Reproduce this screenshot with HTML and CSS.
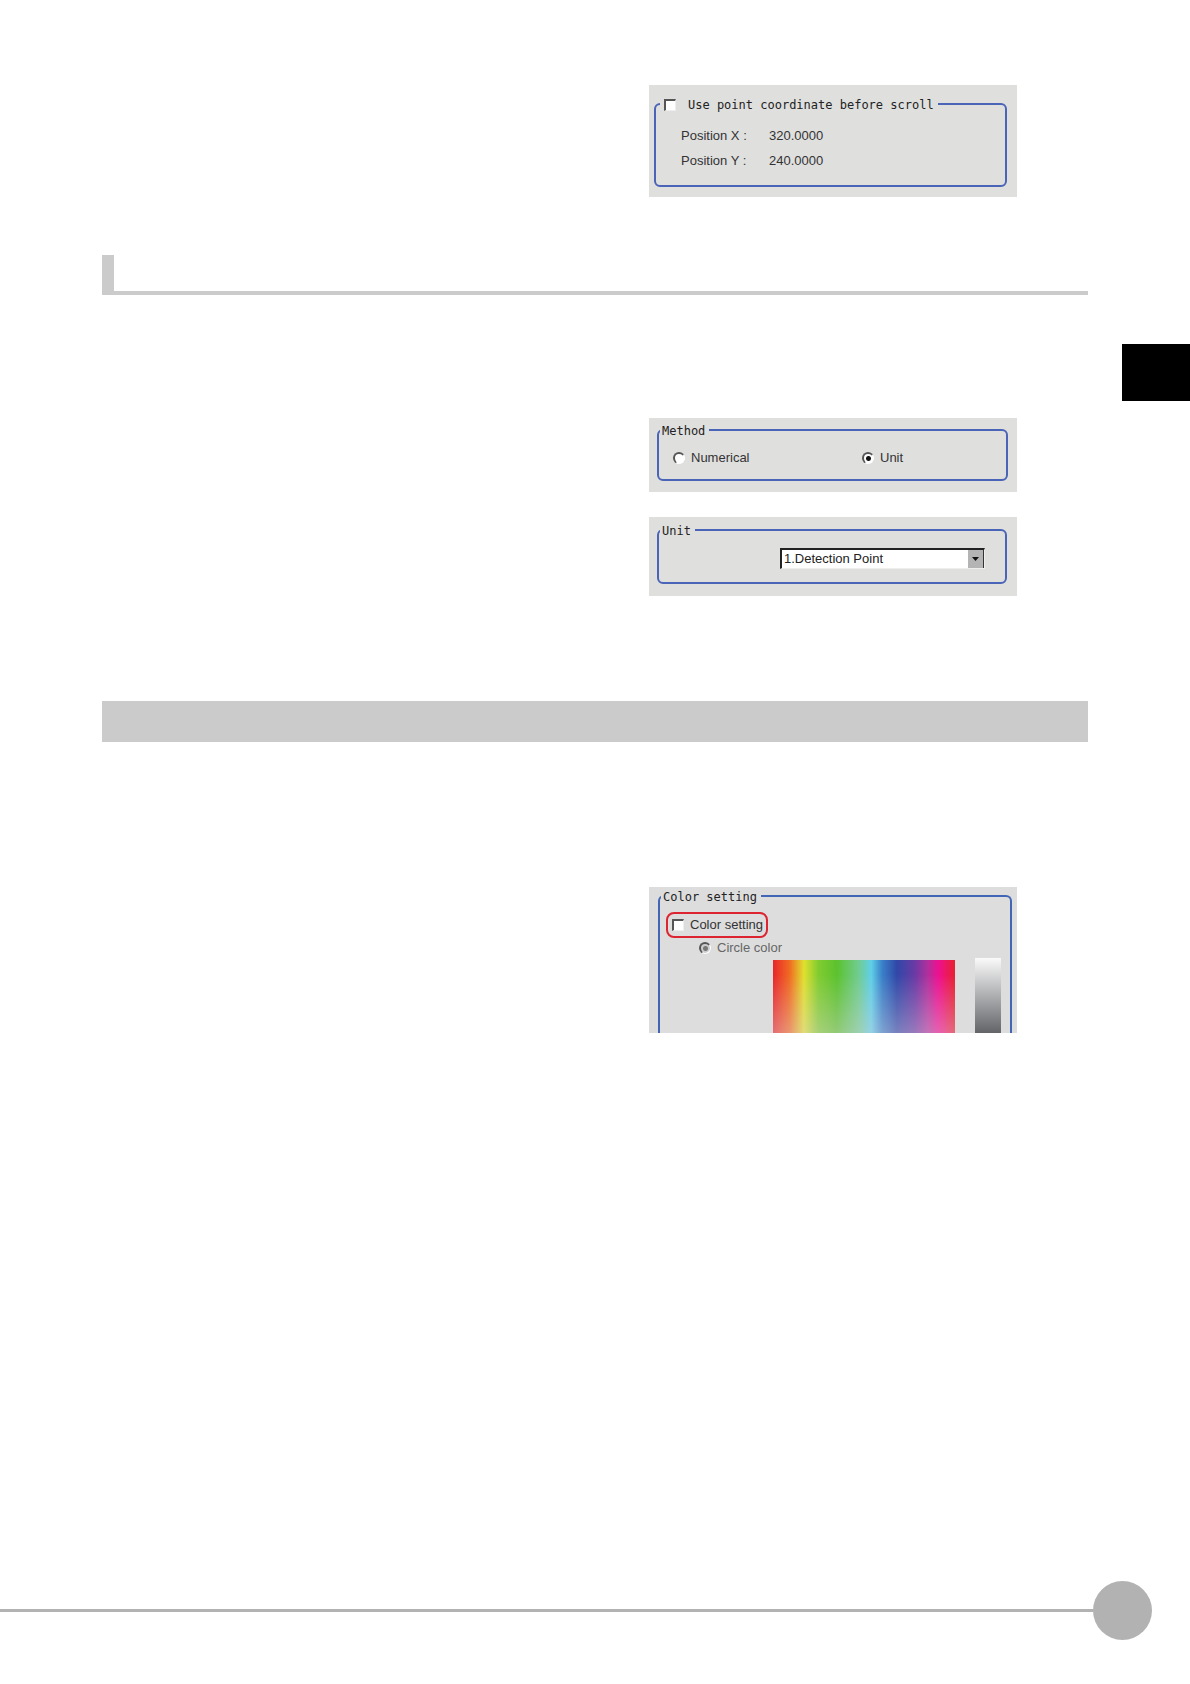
FILE: index.html
```
<!DOCTYPE html>
<html lang="en">

<head>
    <meta charset="utf-8">
    <meta name="viewport" content="width=device-width, initial-scale=1.0">
    <title>Settings</title>
    <link rel="stylesheet" href="styles.css">
</head>

<body>
    <div class="page">
        <main>
            <section class="panel panel-point">
                <fieldset>
                    <legend>
                        <input type="checkbox" id="scroll">
                        <label for="scroll">Use point coordinate before scroll</label>
                    </legend>
                    <dl>
                        <dt>Position X :</dt>
                        <dd>320.0000</dd>
                        <dt>Position Y :</dt>
                        <dd>240.0000</dd>
                    </dl>
                </fieldset>
            </section>

            <div class="heading-line"></div>

            <section class="panel panel-method">
                <fieldset>
                    <legend>Method</legend>
                    <div class="choices">
                        <div class="choice">
                            <input type="radio" name="method" id="numerical">
                            <label for="numerical">Numerical</label>
                        </div>
                        <div class="choice">
                            <input type="radio" name="method" id="unit" checked>
                            <label for="unit">Unit</label>
                        </div>
                    </div>
                </fieldset>
            </section>

            <section class="panel panel-unit">
                <fieldset>
                    <legend>Unit</legend>
                    <div class="dropdown">
                        <select aria-label="Unit">
                            <option>1.Detection Point</option>
                        </select>
                        <span class="arrow">
                            <svg width="7" height="4" viewBox="0 0 7 4"><path d="M0 0h7L3.5 4z" fill="#111"/></svg>
                        </span>
                    </div>
                </fieldset>
            </section>

            <div class="heading-band"></div>

            <section class="panel panel-color">
                <fieldset>
                    <legend>Color setting</legend>
                    <div class="choice marked">
                        <input type="checkbox" id="color">
                        <label for="color">Color setting</label>
                    </div>
                    <div class="choice circle">
                        <input type="radio" name="target" id="circle" checked disabled>
                        <label for="circle">Circle color</label>
                    </div>
                    <div class="picker">
                        <div class="spectrum"></div>
                        <div class="brightness"></div>
                    </div>
                </fieldset>
            </section>
        </main>
        <aside>
            <div class="tab"></div>
        </aside>
    </div>
    <footer>
        <div class="rule"></div>
        <div class="page-number"></div>
    </footer>
</body>

</html>
```

FILE: styles.css
```
* {
    box-sizing: border-box;
}

body {
    margin: 0;
    min-height: 100vh;
    display: flex;
    flex-direction: column;
    background-color: white;
    color: #333;
    font-family: "Liberation Sans", Arial, sans-serif;
    font-size: 13px;
    line-height: 16px;
}

.page {
    display: grid;
    grid-template-columns: minmax(0, 1fr) 102px;
    padding-left: 102px;
}

main {
    padding-top: 85px;
}

/**************** Headings **************/

.heading-line {
    height: 40px;
    margin: 58px 0 123px;
    border-left: 12px solid #cbcbcb;
    border-bottom: 4px solid #cbcbcb;
}

.heading-band {
    height: 41px;
    margin: 105px 0 145px;
    background-color: #cbcbcb;
}

.tab {
    width: 68px;
    height: 57px;
    margin: 344px 0 0 auto;
    background-color: black;
}

/**************** Panels **************/

.panel {
    width: 368px;
    margin-left: auto;
    margin-right: 71px;
    background-color: #dfdfde;
}

.panel-point {
    padding: 11px 10px 10px 5px;
}

.panel-method {
    padding: 4px 9px 11px 8px;
    margin-bottom: 25px;
}

.panel-unit {
    padding: 5px 10px 12px 8px;
}

.panel-color {
    padding: 1px 5px 0 9px;
    background-color: #dddddd;
}

fieldset {
    margin: 0;
    padding: 0;
    min-width: 0;
    border: 2px solid #4a64b8;
    border-radius: 6px;
}

legend {
    padding: 2px 4px 0 2px;
    margin-left: 1px;
    font-family: "DejaVu Sans Mono", monospace;
    font-size: 12px;
    line-height: 14px;
    color: #222;
}

.panel-point legend {
    display: flex;
    align-items: center;
    gap: 12px;
    margin-left: 4px;
    padding: 2px 4px 0;
}

dl {
    display: grid;
    grid-template-columns: 88px 1fr;
    margin: 0;
    padding: 11px 0 12px 25px;
    line-height: 25px;
}

dd {
    margin: 0;
}

/**************** Controls **************/

input {
    appearance: none;
    flex: none;
    width: 12px;
    height: 12px;
    margin: 0;
    background-color: white;
    border: 1px solid #eee;
    border-top: 2px solid #555;
    border-left: 2px solid #555;
}

input[type="radio"] {
    border-radius: 50%;
    border-right-color: white;
    border-bottom-color: white;
}

input[type="radio"]:checked {
    background-image: radial-gradient(circle, #111 2px, transparent 3px);
}

input[type="radio"]:disabled {
    background-color: #ccc;
    background-image: radial-gradient(circle, #777 2px, transparent 3px);
}

.choices {
    display: grid;
    grid-template-columns: 189px 1fr;
    padding: 8px 0 9px 14px;
}

.choice {
    display: flex;
    align-items: center;
    gap: 6px;
    height: 24px;
}

.dropdown {
    display: flex;
    width: 205px;
    height: 21px;
    margin: 10px 20px 13px auto;
    background-color: white;
    border: 1px solid #eee;
    border-top: 2px solid #222;
    border-left: 2px solid #222;
}

select {
    appearance: none;
    flex: 1;
    min-width: 0;
    padding: 0 2px;
    border: 0;
    background-color: white;
    color: #222;
    font: inherit;
}

.arrow {
    display: flex;
    align-items: center;
    justify-content: center;
    width: 16px;
    background-color: #b4b4b4;
    border-right: 1px solid #333;
    pointer-events: none;
}

/**************** Color setting **************/

.panel-color fieldset {
    border-color: #4166b6;
    border-bottom: 0;
    border-radius: 6px 6px 0 0;
}

.marked {
    width: 102px;
    height: 26px;
    margin: 8px 0 0 6px;
    padding-left: 4px;
    border: 2px solid #dc2530;
    border-radius: 8px;
}

.marked label {
    white-space: nowrap;
}

.circle {
    height: 20px;
    margin-left: 39px;
    color: #666;
}

.picker {
    display: flex;
    justify-content: flex-end;
    align-items: flex-end;
    gap: 20px;
    padding-right: 9px;
}

.spectrum {
    width: 182px;
    height: 73px;
    background-image: linear-gradient(transparent 20%, rgba(225, 215, 225, 0.4)),
        linear-gradient(to right, #e8252b, #f06a22 9%, #e0e030 17%, #80cc30 25%, #5cc22e 35%, #70cc90 47%, #60cfe8 54%, #3a80c8 60%, #3048a8 68%, #6a3aa4 78%, #b0309c 85%, #ee1090 91%, #e8202c);
}

.brightness {
    width: 26px;
    height: 75px;
    background-image: linear-gradient(#fafafa, #626468);
}

/**************** Footer **************/

footer {
    display: flex;
    align-items: center;
    margin-top: auto;
    padding: 0 38px 44px 0;
}

.rule {
    flex: 1;
    height: 3px;
    background-color: #b2b2b2;
}

.page-number {
    width: 59px;
    height: 59px;
    border-radius: 50%;
    background-color: #b2b2b2;
}
```
